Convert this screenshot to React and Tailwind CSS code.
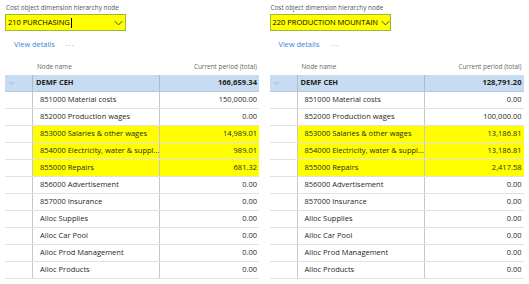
const panels = [
  {
    node: '210 PURCHASING',
    cursor: true,
    total: '166,659.34',
    values: ['150,000.00', '0.00', '14,989.01', '989.01', '681.32', '0.00', '0.00', '0.00', '0.00', '0.00', '0.00'],
  },
  {
    node: '220 PRODUCTION MOUNTAIN',
    cursor: false,
    total: '128,791.20',
    values: ['0.00', '100,000.00', '13,186.81', '13,186.81', '2,417.58', '0.00', '0.00', '0.00', '0.00', '0.00', '0.00'],
  },
];

const names = [
  '851000 Material costs',
  '852000 Production wages',
  '853000 Salaries & other wages',
  '854000 Electricity, water & suppl...',
  '855000 Repairs',
  '856000 Advertisement',
  '857000 Insurance',
  'Alloc Supplies',
  'Alloc Car Pool',
  'Alloc Prod Management',
  'Alloc Products',
];

const highlighted = [2, 3, 4];

function Chevron({ className }) {
  return (
    <svg viewBox="0 0 12 8" className={className} fill="none" stroke="currentColor" strokeWidth="1.2">
      <path d="M1 1.5l5 5 5-5" />
    </svg>
  );
}

function Panel({ data }) {
  return (
    <div className="w-[265px] pl-[5px] pt-[3px]">
      <div className="pl-[1px] text-[6.4px] leading-[10px] text-[#555]">Cost object dimension hierarchy node</div>
      <div className="w-[121px] h-[17px] mt-[1px] bg-[#ffff00] border border-[#9cb833] flex items-center pl-[2px] pr-[2px]">
        <span className="text-[7.5px] text-black whitespace-nowrap">{data.node}</span>
        {data.cursor && <span className="w-px h-[10px] bg-black ml-px" />}
        <Chevron className={`w-[9px] h-[6px] text-[#333] shrink-0 ${data.cursor ? 'ml-auto' : 'ml-[3px]'}`} />
      </div>
      <div className="flex items-center h-[12px] mt-[8px] pl-[9px] text-[7.4px]">
        <span className="text-[#2f86d6]">View details</span>
        <span className="ml-[11px] text-[#7fa6cf] tracking-[1px] -mt-[3px]">...</span>
      </div>
      <div className="flex items-end h-[16px] w-[254px] mt-[8px] text-[6.4px] text-[#666] pb-[3px]">
        <span className="pl-[32px]">Node name</span>
        <span className="ml-auto pr-[2px]">Current period (total)</span>
      </div>
      <div className="w-[254px] text-[7.5px] text-[#1f1f1f]">
        <div className="flex h-[17px] bg-[#c7dcf0] border-b border-[#b5c9dc]">
          <div className="w-[28px] border-r border-[#a9bdd0] flex items-center pl-[3px]">
            <Chevron className="w-[7px] h-[4px] text-[#6f9fd0]" />
          </div>
          <div className="w-[127px] border-r border-[#a9bdd0] flex items-center pl-[3px] font-bold text-[7.5px]">DEMF CEH</div>
          <div className="flex-1 flex items-center justify-end pr-[2px] font-bold text-[7.6px]">{data.total}</div>
        </div>
        {names.map((name, i) => {
          const hi = highlighted.includes(i);
          return (
            <div key={name} className="flex h-[17px] border-b border-[#e1e1e1]">
              <div className="w-[28px] border-r border-[#c8c8c8]" />
              <div className={`w-[127px] border-r border-[#c8c8c8] flex items-center pl-[7px] whitespace-nowrap overflow-hidden ${hi ? 'bg-[#ffff00]' : ''}`}>
                {name}
              </div>
              <div className={`flex-1 flex items-center justify-end pr-[2px] ${hi ? 'bg-[#ffff00]' : ''}`}>
                {data.values[i]}
              </div>
            </div>
          );
        })}
      </div>
    </div>
  );
}

export default function App() {
  return (
    <div className="w-[529px] h-[284px] bg-white flex overflow-hidden font-['Open_Sans',sans-serif]">
      {panels.map((p) => (
        <Panel key={p.node} data={p} />
      ))}
    </div>
  );
}
